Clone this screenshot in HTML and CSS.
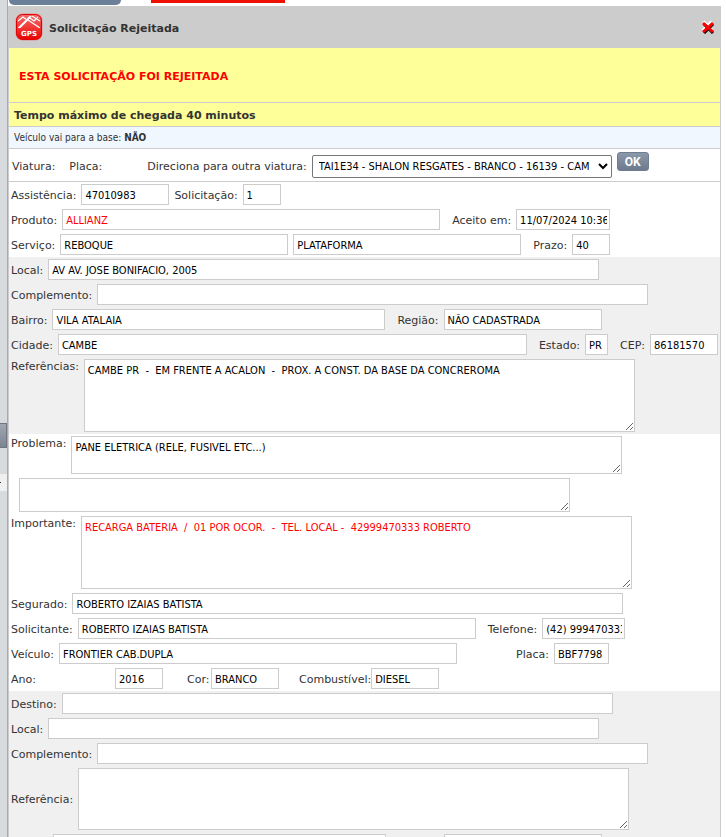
FILE: index.html
```html
<!DOCTYPE html>
<html lang="pt-br">
<head>
    <meta charset="utf-8">
    <title>Solicitação Rejeitada</title>
    <link rel="stylesheet" href="styles.css">
</head>
<body>
    <aside class="menu">
        <div class="menuButton"></div>
        <div class="menuItem"></div>
    </aside>
    <main class="content">
        <div class="tabs">
            <span class="tab"></span>
            <span class="alertBar"></span>
        </div>
        <form class="panel">
            <div class="title">
                <svg class="logo" width="28" height="28" viewBox="0 0 28 28">
                    <defs>
                        <linearGradient id="red" x1="0" y1="0" x2="0" y2="1">
                            <stop offset="0" stop-color="#f07070"/>
                            <stop offset="0.55" stop-color="#f03434"/>
                            <stop offset="1" stop-color="#e80000"/>
                        </linearGradient>
                        <clipPath id="map"><rect x="3" y="3" width="22" height="12"/></clipPath>
                    </defs>
                    <rect x="0.5" y="0.5" width="27" height="27" rx="7" fill="#e08a8a"/>
                    <rect x="1.5" y="1.5" width="25" height="25" rx="6" fill="url(#red)" stroke="#e00000"/>
                    <g clip-path="url(#map)" fill="none" stroke="#fff">
                        <path d="M3 16L16 3" stroke-width="2"/>
                        <path d="M3 8L8 4L12 7M17 3L25 8M13 7L25 15M15 5L19 8L23 4" stroke-width="1.2"/>
                    </g>
                    <text x="14" y="23" class="logoText">GPS</text>
                </svg>
                <b>Solicitação Rejeitada</b>
                <button type="button" class="close" aria-label="Fechar">
                    <svg width="14" height="14" viewBox="0 0 14 14">
                        <path d="M2 2L11 11M11 2L2 11" stroke="#fff" stroke-width="4"/>
                        <path d="M3 4L12 13M12 4L3 13" stroke="#000" stroke-width="3"/>
                        <path d="M2 3L12 12M12 3L2 12" stroke="#f00" stroke-width="3"/>
                    </svg>
                </button>
            </div>
            <div class="rejected">ESTA SOLICITAÇÃO FOI REJEITADA</div>
            <div class="time">Tempo máximo de chegada 40 minutos</div>
            <div class="base">Veículo vai para a base: <b>NÃO</b></div>
            <div class="vehicle">
                <span>Viatura:</span>
                <span class="plate">Placa:</span>
                <label for="viatura">Direciona para outra viatura:</label>
                <select id="viatura">
                    <option>TAI1E34 - SHALON RESGATES - BRANCO - 16139 - CAMBE</option>
                </select>
                <button type="button" class="ok">OK</button>
            </div>

            <section>
                <div class="row">
                    <label for="assistencia">Assistência:</label>
                    <input type="text" id="assistencia" class="w88" value="47010983">
                    <label for="solicitacao">Solicitação:</label>
                    <input type="text" id="solicitacao" class="w38" value="1">
                </div>
                <div class="row">
                    <label for="produto">Produto:</label>
                    <input type="text" id="produto" class="w378 red" value="ALLIANZ">
                    <label for="aceito" class="next">Aceito em:</label>
                    <input type="text" id="aceito" class="w94" value="11/07/2024 10:36">
                </div>
                <div class="row">
                    <label for="servico">Serviço:</label>
                    <input type="text" id="servico" class="w228" value="REBOQUE">
                    <input type="text" class="w228" aria-label="Tipo" value="PLATAFORMA">
                    <label for="prazo" class="next">Prazo:</label>
                    <input type="text" id="prazo" class="w38" value="40">
                </div>
            </section>

            <section class="gray">
                <div class="row">
                    <label for="local">Local:</label>
                    <input type="text" id="local" class="full" value="AV AV. JOSE BONIFACIO, 2005">
                </div>
                <div class="row">
                    <label for="complemento">Complemento:</label>
                    <input type="text" id="complemento" class="full">
                </div>
                <div class="row">
                    <label for="bairro">Bairro:</label>
                    <input type="text" id="bairro" class="w333" value="VILA ATALAIA">
                    <label for="regiao" class="next">Região:</label>
                    <input type="text" id="regiao" class="w158" value="NÃO CADASTRADA">
                </div>
                <div class="row">
                    <label for="cidade">Cidade:</label>
                    <input type="text" id="cidade" class="w469" value="CAMBE">
                    <label for="estado" class="next">Estado:</label>
                    <input type="text" id="estado" class="w23" value="PR">
                    <label for="cep" class="next">CEP:</label>
                    <input type="text" id="cep" class="w68" value="86181570">
                </div>
                <div class="row top">
                    <label for="referencias">Referências:</label>
                    <textarea id="referencias" class="full tall">CAMBE PR  -  EM FRENTE A ACALON  -  PROX. A CONST. DA BASE DA CONCREROMA</textarea>
                </div>
            </section>

            <section>
                <div class="row top">
                    <label for="problema">Problema:</label>
                    <textarea id="problema" class="full short">PANE ELETRICA (RELE, FUSIVEL ETC...)</textarea>
                </div>
                <div class="row indent">
                    <textarea class="full note" aria-label="Observação"></textarea>
                </div>
                <div class="row top">
                    <label for="importante">Importante:</label>
                    <textarea id="importante" class="full tall red">RECARGA BATERIA  /  01 POR OCOR.  -  TEL. LOCAL -  42999470333 ROBERTO</textarea>
                </div>
                <div class="row">
                    <label for="segurado">Segurado:</label>
                    <input type="text" id="segurado" class="full" value="ROBERTO IZAIAS BATISTA">
                </div>
                <div class="row">
                    <label for="solicitante">Solicitante:</label>
                    <input type="text" id="solicitante" class="w398" value="ROBERTO IZAIAS BATISTA">
                    <label for="telefone" class="next">Telefone:</label>
                    <input type="text" id="telefone" class="w83" value="(42) 999470333">
                </div>
                <div class="row">
                    <label for="veiculo">Veículo:</label>
                    <input type="text" id="veiculo" class="w398" value="FRONTIER CAB.DUPLA">
                    <label for="placa" class="far">Placa:</label>
                    <input type="text" id="placa" class="w55" value="BBF7798">
                </div>
                <div class="row car">
                    <label for="ano" class="year">Ano:</label>
                    <input type="text" id="ano" class="w48" value="2016">
                    <label for="cor" class="color">Cor:</label>
                    <input type="text" id="cor" class="w68" value="BRANCO">
                    <label for="combustivel" class="fuel">Combustível:</label>
                    <input type="text" id="combustivel" class="w68" value="DIESEL">
                </div>
            </section>

            <section class="gray">
                <div class="row">
                    <label for="destino">Destino:</label>
                    <input type="text" id="destino" class="full">
                </div>
                <div class="row">
                    <label for="destLocal">Local:</label>
                    <input type="text" id="destLocal" class="full">
                </div>
                <div class="row">
                    <label for="destComplemento">Complemento:</label>
                    <input type="text" id="destComplemento" class="full">
                </div>
                <div class="row">
                    <label for="destReferencia">Referência:</label>
                    <textarea id="destReferencia" class="full medium"></textarea>
                </div>
                <div class="row area">
                    <input type="text" class="w333" aria-label="Bairro">
                    <input type="text" class="w158" aria-label="Região">
                </div>
            </section>
        </form>
    </main>
</body>
</html>
```

FILE: styles.css
```css
*
{
    box-sizing: border-box;
}
body
{
    margin: 0;
    height: 100vh;
    overflow: hidden;
    display: flex;
    background: #fff;
    color: #333;
    font-family: Verdana, "DejaVu Sans", sans-serif;
    font-size: 11px;
}
.menu
{
    flex: none;
    width: 8px;
    background: #d7dbde;
    border-right: 1px solid #aaa;
    overflow: hidden;
}
.menuButton
{
    margin-top: 423px;
    height: 25px;
    background: linear-gradient(#a0a7b1, #7d8590);
    border: 1px solid #6d7682;
    border-left: none;
}
.menuItem
{
    margin-top: 26px;
    height: 17px;
    padding-top: 8px;
    background: #f0f0f0;
}
.menuItem:before
{
    content: "";
    display: block;
    width: 1px;
    height: 1px;
    background: #333;
}
.content
{
    flex: 1;
    min-width: 0;
    padding-right: 5px;
}
.tabs
{
    display: flex;
    gap: 30px;
    padding-left: 1px;
    height: 6px;
}
.tab
{
    width: 112px;
    height: 5px;
    background: #6b7f98;
    border-radius: 0 0 6px 6px;
}
.alertBar
{
    width: 134px;
    height: 3px;
    background: #f01000;
}
.panel
{
    border: solid #ccc;
    border-width: 0 1px;
}
.title
{
    display: flex;
    align-items: center;
    height: 42px;
    padding: 0 5px 0 6px;
    gap: 6px;
    background: #ccc;
}
.title b
{
    padding-top: 2px;
}
.logoText
{
    font: bold 7px "DejaVu Sans", sans-serif;
    text-anchor: middle;
    fill: #fff;
}
.close
{
    margin-left: auto;
    padding: 0;
    border: none;
    background: none;
    line-height: 0;
}
.rejected
{
    height: 55px;
    line-height: 57px;
    padding-left: 10px;
    background: #ff9;
    border-bottom: 1px solid #ccc;
    color: #f00;
    font-weight: bold;
}
.time
{
    height: 24px;
    line-height: 25px;
    padding-left: 5px;
    background: #ff9;
    border-bottom: 1px solid #ccc;
    font-weight: bold;
}
.base
{
    height: 22px;
    line-height: 22px;
    padding-left: 5px;
    background: #f0f7ff;
    border-bottom: 1px solid #ccc;
    font: 10px/22px Tahoma, "DejaVu Sans Condensed", sans-serif;
}
.vehicle
{
    display: flex;
    align-items: center;
    height: 33px;
    padding: 2px 0 0 3px;
    gap: 5px;
    border-bottom: 1px solid #ccc;
}
.plate
{
    margin: 0 40px 0 9px;
}
select
{
    width: 300px;
    height: 23px;
    padding: 0 6px 0 2px;
    border: 1px solid #767676;
    border-radius: 2px;
    background: #fff;
    color: #000;
    font: 11px Tahoma, "DejaVu Sans Condensed", sans-serif;
}
.ok
{
    align-self: flex-start;
    margin-top: 1px;
    width: 32px;
    height: 19px;
    padding: 0;
    border: 1px solid #6e7d90;
    border-radius: 3px;
    background: linear-gradient(#8a98aa, #6d7b8d);
    color: #fff;
    font: bold 12px Roboto, sans-serif;
}
.gray
{
    background: #f0f0f0;
}
.row
{
    display: flex;
    align-items: center;
    gap: 5px;
    padding: 2px 0 2px 2px;
}
.row label,
.vehicle span,
.vehicle label
{
    white-space: nowrap;
}
.row label
{
    padding-top: 1px;
}
.top
{
    align-items: flex-start;
}
.indent
{
    padding-left: 10px;
}
.next
{
    margin-left: 7px;
}
.far
{
    margin-left: 54px;
}
.car
{
    gap: 0;
}
.year
{
    width: 104px;
}
.color
{
    width: 24px;
    margin-left: 24px;
}
.fuel
{
    margin-left: 20px;
}
.area
{
    gap: 58px;
    padding-left: 44px;
}
input,
textarea
{
    flex: none;
    height: 21px;
    margin: 0;
    padding: 2px 2px 0 3px;
    border: 1px solid #ccc;
    border-radius: 0;
    background: #fff;
    color: #000;
    font: 11px Tahoma, "DejaVu Sans Condensed", sans-serif;
}
textarea
{
    padding: 4px 3px 3px;
    resize: both;
}
.tall
{
    height: 73px;
}
.medium
{
    height: 62px;
}
.short
{
    height: 38px;
}
.note
{
    height: 34px;
}
.red
{
    color: #f00;
}
.full { width: 551px; }
.w23 { width: 23px; }
.w38 { width: 38px; }
.w48 { width: 48px; }
.w55 { width: 55px; }
.w68 { width: 68px; }
.w83 { width: 83px; }
.w88 { width: 88px; }
.w94 { width: 94px; }
.w158 { width: 158px; }
.w228 { width: 228px; }
.w333 { width: 333px; }
.w378 { width: 378px; }
.w398 { width: 398px; }
.w469 { width: 469px; }
```
